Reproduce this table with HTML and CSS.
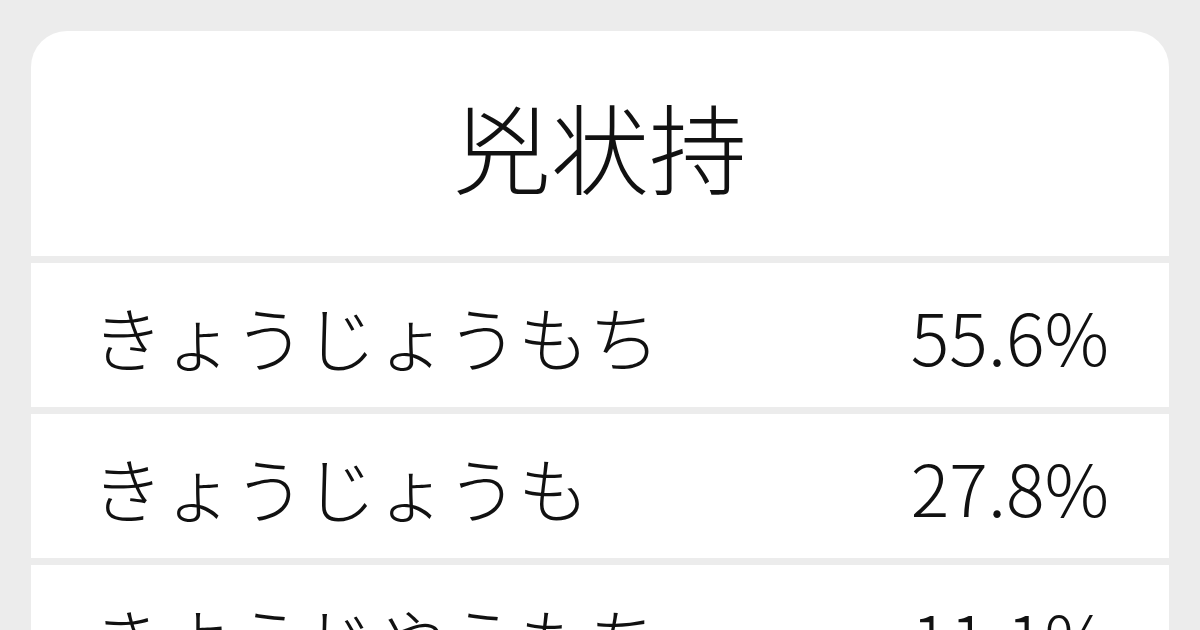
FILE: index.html
```html
<!DOCTYPE html>
<html lang="ja">
<head>
<meta charset="utf-8">
<link rel="stylesheet" href="styles.css">
</head>
<body>
<div class="page">
  <div class="card">
    <div class="header"><h1 class="title">兇状持</h1></div>
    <div class="row"><span class="reading">きょうじょうもち</span><span class="pct">55.6%</span></div>
    <div class="row"><span class="reading">きょうじょうも</span><span class="pct">27.8%</span></div>
    <div class="row"><span class="reading">きようじやうもち</span><span class="pct">11.1%</span></div>
  </div>
</div>
</body>
</html>
```

FILE: styles.css
```css
html, body {
  margin: 0;
  padding: 0;
  background: #ececec;
}
body {
  width: 1200px;
  height: 630px;
  overflow: hidden;
  font-family: "Noto Sans CJK JP", "Noto Sans", sans-serif;
  color: #111;
}
.page {
  padding: 31px;
}
.card {
  display: flex;
  flex-direction: column;
  gap: 7px;
  border-radius: 36px;
  overflow: hidden;
  background: #ececec;
}
.header {
  height: 225px;
  background: #fff;
  display: flex;
  align-items: center;
  justify-content: center;
}
.title {
  margin: 0;
  font-size: 98px;
  font-weight: 300;
  line-height: 1;
}
.row {
  height: 144px;
  background: #fff;
  display: flex;
  align-items: center;
  justify-content: space-between;
  padding: 0 60px 0 61px;
  font-weight: 300;
  line-height: 1;
}
.reading {
  font-size: 71px;
}
.pct {
  font-size: 72px;
}
```
